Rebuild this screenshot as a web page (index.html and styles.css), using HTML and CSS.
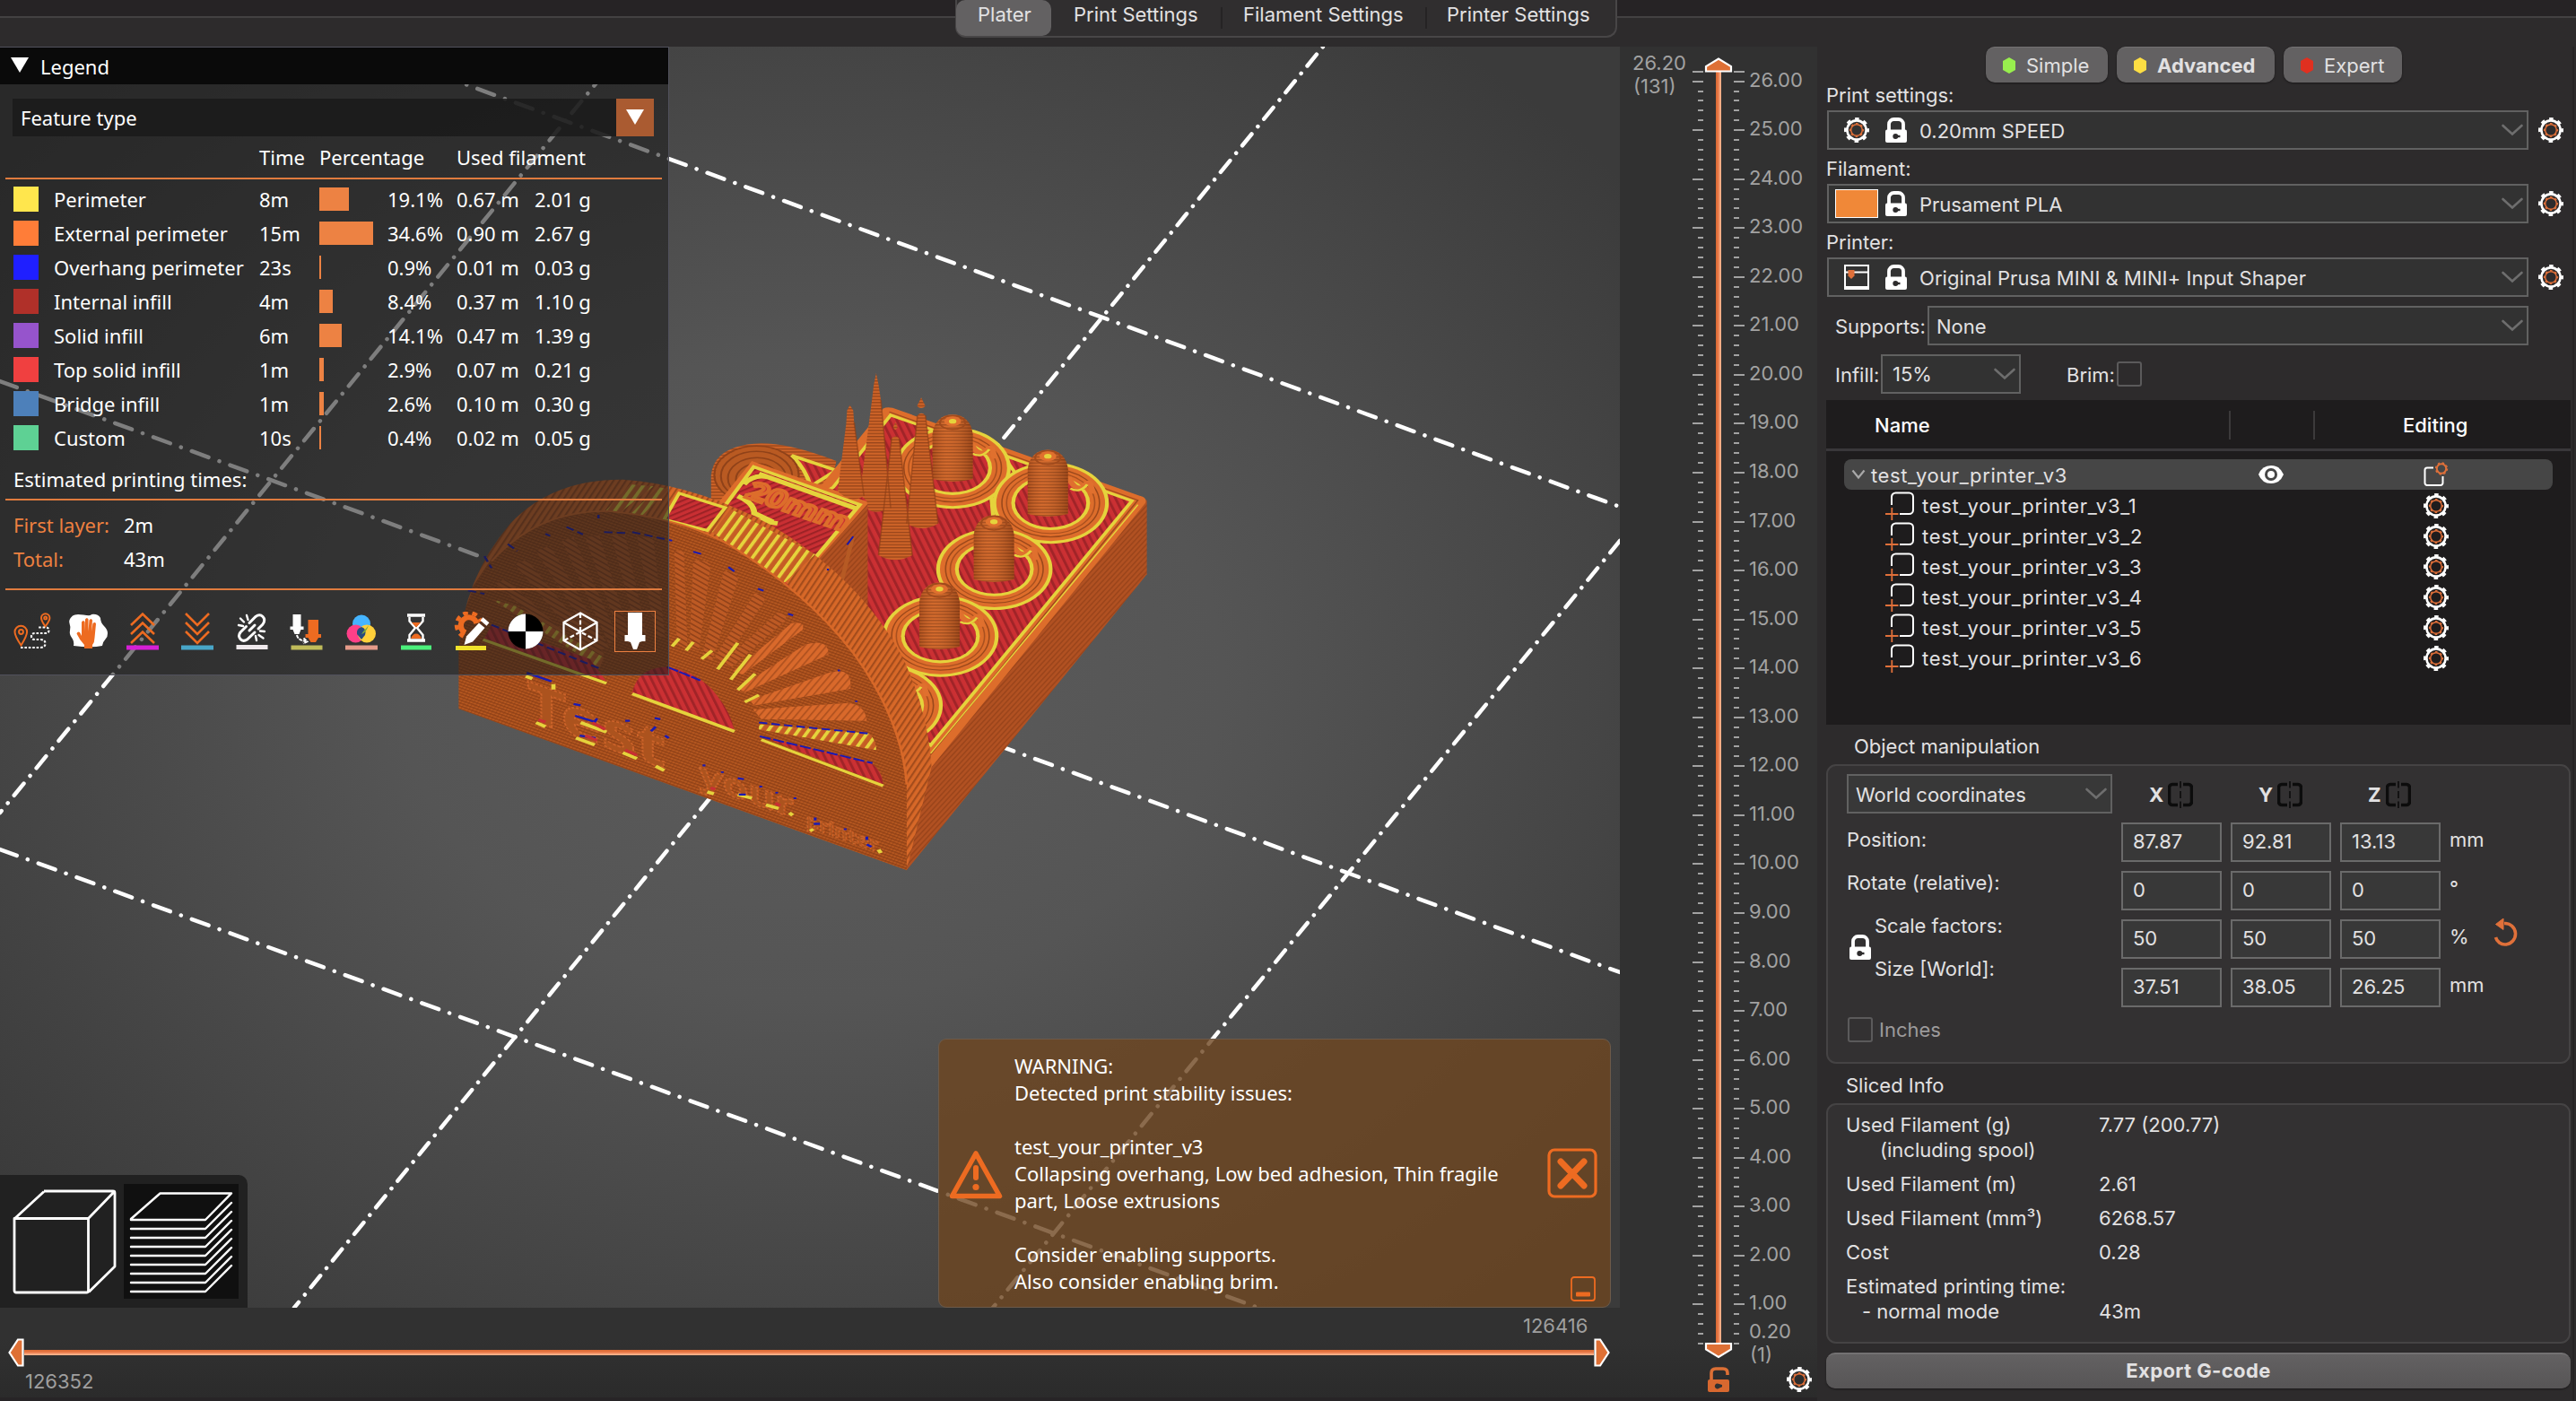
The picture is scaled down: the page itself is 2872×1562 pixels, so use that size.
FILE: index.html
```html
<!DOCTYPE html>
<html lang="en">
<head>
<meta charset="utf-8">
<title>PrusaSlicer</title>
<link rel="stylesheet" href="styles.css">
</head>
<body>
<svg class="defs" width="0" height="0">
  <symbol id="gear" viewBox="0 0 28 28">
    <circle cx="14" cy="14" r="10.6" fill="none" stroke="#fff" stroke-width="2.6"/>
    <circle cx="14" cy="14" r="12.6" fill="none" stroke="#fff" stroke-width="2.8" stroke-dasharray="4.6 5.296" stroke-dashoffset="2.3"/>
    <circle cx="14" cy="14" r="6.3" fill="none" stroke="#e0703a" stroke-width="1.5"/>
    <circle cx="14" cy="14" r="7.4" fill="none" stroke="#e0703a" stroke-width="1.4" stroke-dasharray="2.6 3.212" stroke-dashoffset="1.3"/>
  </symbol>
  <symbol id="lock" viewBox="0 0 24 28">
    <path d="M4 15V7.500a5.500 5.500 0 0 1 5.500-5.500h5a5.500 5.500 0 0 1 5.500 5.500V15" fill="none" stroke="#fff" stroke-width="3.8"/>
    <rect x="0" y="13.500" width="24" height="14.500" rx="2" fill="#fff"/>
    <circle cx="11.300" cy="21" r="3" fill="#2d2b2c"/><path d="M13 19.800h3.500v2.400H13z" fill="#2d2b2c"/>
  </symbol>
  <symbol id="chev" viewBox="0 0 24 14"><path d="M1.500 2 12 11.500 22.500 2" fill="none" stroke="#6e6e6e" stroke-width="2.600" stroke-linecap="round"/></symbol>
  <symbol id="part" viewBox="0 0 34 34">
    <path d="M7 16V7a4.500 4.500 0 0 1 4.500-4.500h15A4.500 4.500 0 0 1 31 7v14.500a4.500 4.500 0 0 1-4.500 4.500H16" fill="none" stroke="#fff" stroke-width="2"/>
    <path d="M0 26h14.500M7.300 19v14" stroke="#e0703a" stroke-width="1.800"/>
  </symbol>
  <symbol id="mirror" viewBox="0 0 28 30">
    <path d="M11 3.500H5a3.500 3.500 0 0 0-3.500 3.500v16A3.500 3.500 0 0 0 5 26.500h6M17 3.500h6A3.500 3.500 0 0 1 26.500 7v16a3.500 3.500 0 0 1-3.500 3.500h-6" fill="none" stroke="#0c0c0c" stroke-width="3.600"/>
    <path d="M14 0v7.500M14 11v8M14 22.500V30" stroke="#0c0c0c" stroke-width="1.600"/>
  </symbol>
</svg>

<header class="tabbar">
  <nav class="tabs"><span class="tab active">Plater</span><span class="tab t2">Print Settings</span><span class="tab t3">Filament Settings</span><span class="tab t4">Printer Settings</span></nav>
</header>

<div class="main">
<div class="left">
<div class="upper">
<section class="view">
  <svg class="scene" viewBox="0 52 1806 1406" width="1806" height="1406">
    <defs>
      <pattern id="red" width="15" height="15" patternUnits="userSpaceOnUse" patternTransform="rotate(-20)"><rect width="15" height="15" fill="#cb3033"/><rect width="6" height="15" fill="#a12428"/></pattern>
      <pattern id="red2" width="13" height="13" patternUnits="userSpaceOnUse" patternTransform="rotate(-30)"><rect width="13" height="13" fill="#c92f33"/><rect width="13" height="5" fill="#9c2226"/></pattern>
      <pattern id="face" width="8" height="8" patternUnits="userSpaceOnUse" patternTransform="rotate(26)"><rect width="8" height="8" fill="#b65820"/><rect y="0" width="8" height="3.500" fill="#944317"/><rect width="2.500" height="8" fill="#8a3e16" opacity=".45"/></pattern>
      <pattern id="side" width="9" height="9" patternUnits="userSpaceOnUse" patternTransform="rotate(-56)"><rect width="9" height="9" fill="#b15122"/><rect width="9" height="3.500" fill="#9c451b"/></pattern>
      <pattern id="band" width="12" height="12" patternUnits="userSpaceOnUse" patternTransform="rotate(-64)"><rect width="12" height="12" fill="#d76828"/><rect width="12" height="4.500" fill="#a34c1c"/></pattern>
      <pattern id="wedge" width="13" height="13" patternUnits="userSpaceOnUse" patternTransform="rotate(-58)"><rect width="13" height="13" fill="#d9692b"/><rect width="13" height="4" fill="#b25320"/></pattern>
      <pattern id="wedged" width="12" height="12" patternUnits="userSpaceOnUse" patternTransform="rotate(38)"><rect width="12" height="12" fill="#bd5a24"/><rect width="12" height="4" fill="#93431a"/></pattern>
      <pattern id="rings" width="10" height="9" patternUnits="userSpaceOnUse"><rect width="10" height="9" fill="#cf6428"/><rect width="10" height="3.500" fill="#97451a"/></pattern>
      <pattern id="ystripe" width="19" height="19" patternUnits="userSpaceOnUse" patternTransform="rotate(28)"><rect width="19" height="19" fill="#c65d25"/><rect width="8" height="19" fill="#e5d33c"/></pattern>
      <linearGradient id="cyl"><stop offset="0" stop-color="#5a2408" stop-opacity=".25"/><stop offset=".35" stop-color="#ffa055" stop-opacity=".12"/><stop offset="1" stop-color="#4a1c05" stop-opacity=".35"/></linearGradient>
      <g id="ring">
        <ellipse rx="124" ry="119" fill="#e5d33c"/><ellipse rx="116" ry="111" fill="#dd6d2b"/>
        <ellipse rx="104" ry="99" fill="none" stroke="#9a481b" stroke-width="3"/><ellipse rx="94" ry="89" fill="none" stroke="#a9501f" stroke-width="3"/>
        <ellipse rx="84" ry="79" fill="#e5d33c"/><ellipse rx="76" ry="71" fill="url(#red)"/>
        <path d="M38-75q12 38 30 30q10-18 16-12l6 30" fill="none" stroke="#e0702e" stroke-width="13"/><path d="M42-42q20 15 36-12" fill="none" stroke="#e5d33c" stroke-width="6"/>
      </g>
      <g id="post">
        <path d="M-43 168V38C-40 0-22-19 0-19S40 0 43 38V168Q0 184-43 168Z" fill="url(#rings)"/>
        <path d="M-43 168V38C-40 0-22-19 0-19S40 0 43 38V168Q0 184-43 168Z" fill="url(#cyl)"/>
        <ellipse rx="27" ry="20" cy="4" fill="none" stroke="#a04a1c" stroke-width="4"/><ellipse rx="18" ry="14" fill="#e0702e"/><ellipse rx="8" ry="7" fill="#e5d33c"/>
      </g>
    </defs>
    <g class="bed">
      <path class="la" d="M698 52 0 906"/>
      <path class="la a2" d="M1475 52 328 1458"/>
      <path class="la" d="M1806 603 1107 1458"/>
      <path class="lb" d="M404 52 1806 565"/>
      <path class="lb" d="M0 425 1806 1084"/>
      <path class="lb" d="M0 947 1403 1458"/>
    </g>
    <g transform="translate(480 400) scale(.523 .38265)">
      <!-- round hole stub at the back -->
      <path d="M598 340Q605 250 705 246Q770 246 865 298L840 470L598 430Z" fill="url(#rings)"/>
      <path d="M770 282 865 325 810 372Q800 320 770 282Z" fill="url(#red)" stroke="#e5d33c" stroke-width="9"/>
      <ellipse cx="695" cy="340" rx="88" ry="84" fill="#b95a22"/>
      <g fill="none" stroke="#8f4219" stroke-width="4"><ellipse cx="695" cy="338" rx="90" ry="84"/><ellipse cx="695" cy="342" rx="76" ry="72"/><ellipse cx="696" cy="348" rx="62" ry="60"/><ellipse cx="697" cy="352" rx="46" ry="46"/></g>
      <!-- plate -->
      <path d="M1527 410V628L1015 1490 990 1300 1065 1170Z" fill="url(#side)"/>
      <path d="M965 145Q972 140 985 143L1518 402Q1528 410 1524 420L1065 1195 800 900 600 560 835 365Z" fill="#dd6d2b"/>
      <path d="M978 155 1508 412 1065 1155" fill="none" stroke="#9f4a1c" stroke-width="3"/>
      <path d="M981 164 1495 414 1066 1126 780 860 620 560 858 375Z" fill="url(#red)" stroke="#e5d33c" stroke-width="8"/>
      <path d="M1508 425 1066 1150" stroke="#e5d33c" stroke-width="3"/>
      <path d="M1195 400 1200 470M1222 285 1245 330 1215 420M1300 535 1200 505" stroke="#e5d33c" stroke-width="8" fill="none"/>
      <use href="#ring" transform="translate(1113 318)"/>
      <use href="#ring" transform="translate(1322 420)"/>
      <use href="#ring" transform="translate(1202 613)"/>
      <use href="#ring" transform="translate(1087 808)"/>
      <use href="#ring" transform="translate(968 1010)"/>
      <use href="#post" transform="translate(1113 182)"/>
      <use href="#post" transform="translate(1316 284)"/>
      <use href="#post" transform="translate(1201 475)"/>
      <use href="#post" transform="translate(1085 671)"/>
      <!-- 20mm block -->
      <path d="M932 420V720L870 660 815 590Z" fill="url(#side)"/>
      <path d="M685 298 935 418 822 592 612 422Z" fill="#dd6d2b"/>
      <path d="M689 315 915 425 820 580 628 428Z" fill="url(#red2)" stroke="#e5d33c" stroke-width="9"/>
      <path d="M700 335 905 435M668 365Q690 335 720 345M690 470 740 480M655 400Q690 420 690 450L730 475" stroke="#e5d33c" stroke-width="13" fill="none"/>
      <text class="emboss top" transform="matrix(.9 .43 -.42 .85 668 402)">20mm</text>
      <path d="M900 520 875 655" stroke="#b65a24" stroke-width="9"/><path d="M901 518 888 542" stroke="#1616b0" stroke-width="4"/>
      <!-- spikes -->
      <g id="spikes" fill="url(#rings)">
        <path d="M894 135 901 150 903 185 924 400Q895 425 868 385L886 190 888 150Z"/>
        <path d="M950 42 955 75 960 120 981 435Q948 455 933 440L930 415 915 395 941 120 945 75Z"/>
        <path d="M1046 113 1055 138Q1046 150 1037 138ZM1038 165Q1046 152 1055 165L1082 480Q1048 508 1015 480Z"/>
        <path d="M991 185 996 200 991 208 986 200ZM983 232Q991 220 999 232L1027 572Q991 600 955 572Z"/>
      </g>
      <g fill="none" stroke="#8a3e16" stroke-width="3" opacity=".6"><path d="M903 185 924 400M960 120 981 435M1055 165 1082 480M999 232 1027 572M983 232 955 572M1038 165 1015 480"/></g>
      <!-- arch -->
      <path d="M60 850Q70 640 170 480Q260 350 410 352Q560 365 720 480Q920 640 1010 880Q1062 1040 1068 1190L1015 1490 1000 1130Q930 900 760 655Q620 500 480 465Q330 420 160 560Q70 680 60 850Z" fill="url(#band)"/>
      <path d="M425 366 475 372 400 452 370 448ZM485 374 508 380 450 458 425 455Z" fill="url(#ystripe)"/>
      <path d="M530 392 628 434 590 500 498 468Z" fill="url(#red2)" stroke="#e5d33c" stroke-width="8"/>
      <path d="M640 438 820 570 755 652 600 505Z" fill="url(#ystripe)"/>
      <path d="M60 850Q66 690 130 590Q230 440 380 444Q540 465 640 545Q800 680 900 855Q1005 1050 1015 1240V1490L60 1020Z" fill="url(#face)"/>
      <path d="M130 590Q230 440 380 444Q540 465 640 545Q800 680 900 855Q1005 1050 1015 1240" fill="none" stroke="#d76828" stroke-width="5"/>
      <!-- fan slots -->
      <g fill="url(#wedged)">
        <path d="M520 560 540 560 548 850 525 830Z"/><path d="M560 590Q590 580 597 605L572 850 552 840Z"/>
        <path d="M625 620Q655 615 655 645L600 880 580 860Z"/><path d="M690 685Q712 680 712 705L622 890 606 870Z"/>
        <path d="M740 740Q765 740 755 765L640 900 626 880Z"/>
        <path d="M440 515 475 525 500 810 480 810ZM385 512 415 515 460 800 440 800ZM330 520 360 515 425 810 405 815ZM280 530 305 520 400 815 380 830ZM225 560 255 545 380 840 360 850ZM180 600 205 585 370 860 350 880ZM140 655 160 640 360 890 350 905Z"/>
      </g>
      <g fill="url(#wedge)">
        <path d="M770 770Q800 765 793 790L665 920 645 910Z"/><path d="M800 832Q850 815 848 862L670 972 655 960Z"/>
        <path d="M850 915Q900 895 895 962L690 1010 680 995Z"/><path d="M870 1005Q925 995 930 1055L705 1050 688 1022Z"/>
      </g>
      <path d="M700 1065 935 1092Q950 1110 950 1140L700 1080Z" fill="url(#ystripe)"/>
      <path d="M130 700 180 720 370 870 360 900Z" fill="url(#ystripe)" opacity=".8"/>
      <path d="M515 838 530 815M545 850 560 825M578 875 600 850M612 905 655 828M640 935 682 862M655 965 692 918M670 1000 700 980" stroke="#e5d33c" stroke-width="8"/>
      <path d="M430 975Q440 900 505 898 575 915 610 980 640 1030 648 1085Z" fill="url(#red)"/><path d="M430 976 648 1086" stroke="#e5d33c" stroke-width="9"/>
      <path d="M505 898 575 937" stroke="#1a1ab4" stroke-width="5" stroke-dasharray="26 3"/>
      <path d="M705 1100 940 1178Q962 1200 965 1240Z" fill="url(#red)"/><path d="M705 1110 965 1244" stroke="#e5d33c" stroke-width="8"/>
      <path d="M115 815 130 775 340 875 375 940Z" fill="url(#red)"/><path d="M112 818 375 946" stroke="#e5d33c" stroke-width="8"/>
      <g stroke="#1a1ab4" stroke-width="5" fill="none" stroke-dasharray="18 9"><path d="M700 1060 935 1092"/><path d="M702 1100 942 1178" stroke-dasharray="24 6"/><path d="M130 775 365 905"/><path d="M80 675 115 685M165 540 185 560M245 510 255 516M290 490 325 512M358 455v10M370 505 420 508M430 505 515 530M560 562 580 570M635 607 650 622M698 670 710 676M762 743 773 748M115 575 130 610M868 908h5M905 998h5M845 614h4"/></g>
      <!-- raised lettering -->
      <g class="letters">
        <text class="emboss f1" transform="matrix(1 .49 0 1.05 205 1048)">T</text>
        <text class="emboss f1" transform="matrix(1 .49 0 1.05 278 1085)">est</text>
        <text class="emboss f2" transform="matrix(1 .49 0 1.05 572 1240)">your</text>
        <text class="emboss f3" transform="matrix(1 .49 0 1.2 800 1362)">printer</text>
      </g>
      <path d="M203 925 217 932M262 948v16M225 1060 245 1072M320 1060 375 1088M310 1105 350 1125M410 1148 440 1165M480 1187 498 1200M590 1262 604 1268M655 1270 685 1280M715 1300 742 1310M765 1323 772 1330M810 1370 815 1376M955 1430 960 1440" stroke="#e5d33c" stroke-width="9"/>
      <path d="M205 915 258 940M305 1006 320 1010M308 1040 350 1058 355 1048M318 1098 352 1105M415 1055h10M470 1085 480 1072M478 1047 490 1050M500 1098 508 1105M583 1182v6M622 1202v5M655 1222 668 1225M704 1244v5M657 1270h15M738 1262v5M777 1278v5M820 1337v8M817 1355h13M884 1368v5M930 1392v10M930 1415 940 1422" stroke="#1a1ab4" stroke-width="6" fill="none"/>
      <path d="M345 1060 372 1080M330 1098 355 1112M415 1140 440 1155M230 1052 245 1058M597 1250 607 1255M735 1295 745 1302" stroke="#c92f33" stroke-width="8"/>
    </g>
  </svg>

  <aside class="legend">
    <div class="lg-title"><i class="tri"></i>Legend</div>
    <div class="lg-combo"><span>Feature type</span><b><i class="tri"></i></b></div>
    <div class="lg-row lg-head"><span></span><span></span><span>Time</span><span>Percentage</span><span></span><span class="wide">Used filament</span></div>
    <hr>
    <div class="lg-rows" id="features"></div>
    <p class="lg-est">Estimated printing times:</p>
    <hr>
    <dl><dt>First layer:</dt><dd>2m</dd><dt>Total:</dt><dd>43m</dd></dl>
    <hr>
    <div class="tools">
      <svg viewBox="0 0 44 44"><g fill="none" stroke="#ed6b21" stroke-width="2"><path d="M8.500 37.500Q1.500 27 1.500 22.500a6.800 6.800 0 0 1 13.600 0Q15 27 8.500 37.500Z"/><circle cx="8.500" cy="22.500" r="2.400"/><path d="M35.500 16.500Q31 10 31 7a4.700 4.700 0 0 1 9.400 0q0 3-4.900 9.500Z"/><circle cx="35.700" cy="7" r="1.500"/></g><path d="M8 40h22q5.500 0 5.500-4.500T30 31h-6q-4 0-4-3.500t4-3.500h12q3.500 0 3.500-3.200T36 17.500H27" fill="none" stroke="#fff" stroke-width="2.200" stroke-dasharray="2.600 1.800"/></svg>
      <svg viewBox="0 0 44 44"><path d="M5 4.500Q8 2 17 3.500T26 3q7-1 10 4 0 5 4 9t4 8q0 4-2 6-3 3-4 8-12 2.500-32 0 1-5-2-9T2 21q1-4-.5-8T5 4.500Z" fill="#fff"/><path d="M15 27V11.500q2-3 3.500 0V22l.5-13.500q2-3 3.500 0V22l1-12.500q2-3 3.500 0L26 22l1.500-9q2.500-2 3.500.5L29.500 29q0 5-2.500 8v4h-9v-4q-5-5-8.500-12.500 1-3 3.500-1.500Z" fill="#ed6b21"/></svg>
      <svg viewBox="0 0 44 44"><path d="M9 15 22 2.500 35 15M9 25 22 12.500 35 25M9 35 22 22.500 35 35" fill="none" stroke="#ed6b21" stroke-width="2.600"/><path d="M4 37.500h36v5H4z" fill="#d61fd6"/></svg>
      <svg viewBox="0 0 44 44"><path d="M9 2 22 15 35 2M9 12 22 25 35 12M9 22 22 35 35 22" fill="none" stroke="#ed6b21" stroke-width="2.600"/><path d="M4 37.500h36v5H4z" fill="#48a6c8"/></svg>
      <svg viewBox="0 0 44 44"><g fill="none" stroke="#fff" stroke-width="3" stroke-linecap="round"><path d="M19 12.500l7-7q4.500-3.500 8 0t0 8.500l-5 5M25 23l-8.500 8q-4.500 3-7.500-.5t0-7.500l6.500-6.500M19 21l6-6"/><path d="M16 4l1.500 5M9 7.500l4 4M7 15l5 1M36 22l-5-.5M34.500 29.500l-5-3.500M27 32l-1-5" stroke-width="2.400"/></g><path d="M4.500 37h35v5h-35z" fill="#efe9ec"/></svg>
      <svg viewBox="0 0 44 44"><path d="M6.500 3h9v13.500h3V20h-3l-2 5h-5l-2-5h-3v-3.500h3Z" fill="#fff"/><path d="M23.500 9H35v16h3v4h-3l-3 5h-5.500l-3-5h-3v-4h3Z" fill="#ed6b21"/><path d="M11 26q1 6 10 7M18.500 29.500l4 3.800-4.500 2" fill="none" stroke="#fff" stroke-width="2" stroke-dasharray="4 1"/><path d="M4.500 37.500h35v5h-35z" fill="#c0bb5a"/></svg>
      <svg viewBox="0 0 44 44"><circle cx="22" cy="13.500" r="10" fill="#45b4ff"/><circle cx="15.500" cy="24.500" r="10" fill="#ff3f88"/><circle cx="28" cy="24.500" r="10" fill="#ffd03a"/><path d="M22 17q6 2 4 9l-4 5-5-6q-1-6 5-8Z" fill="#274a7d"/><path d="M24 22q4-4 6-7-3 9-8 10Z" fill="#7fa83e"/><path d="M4 37.500h36v5H4z" fill="#e59b8a"/></svg>
      <svg viewBox="0 0 44 44"><path d="M12 4h20M12 32h20" stroke="#fff" stroke-width="3.600"/><path d="M14.500 6v4.500L21 18l-6.500 8v5M29.500 6v4.500L23 18l6.500 8v5" fill="none" stroke="#fff" stroke-width="2.400"/><path d="M17 12h10l-5 5.500ZM16 30q2-5.500 6-5.500t6 5.500Z" fill="#ed6b21"/><path d="M5 37.500h34v5H5z" fill="#4bf07b"/></svg>
      <svg viewBox="0 0 44 44"><path d="M16 23.500A9 9 0 1 1 28.500 13" fill="none" stroke="#ed6b21" stroke-width="6"/><path d="M13.800 27.500A13.800 13.800 0 1 1 33 11" fill="none" stroke="#ed6b21" stroke-width="4.500" stroke-dasharray="5.500 4.600"/><path d="M31 12.500 37.500 18 24 33.500 14.500 37 17 27.500Z" fill="#fff"/><path d="M34 8l7 6" stroke="#fff" stroke-width="4.500"/><path d="M5 38h34v5H5z" fill="#f0e22b"/></svg>
      <svg viewBox="0 0 44 44"><circle cx="22" cy="22" r="19.500" fill="#000"/><path d="M22 22V2.500A19.500 19.500 0 0 0 2.500 22ZM22 22v19.500A19.500 19.500 0 0 0 41.500 22Z" fill="#fff"/></svg>
      <svg viewBox="0 0 44 44"><path d="M22 1.500 40.500 12v20L22 42.500 3.500 32V12ZM3.500 12 22 22.500 40.500 12M22 22.500v20" fill="none" stroke="#fff" stroke-width="2.200"/><path d="M22 2v20M4 32l18-9.500L40 32" fill="none" stroke="#fff" stroke-width="2.200" stroke-dasharray="5 2.500"/></svg>
      <svg class="on" viewBox="0 0 44 44"><path d="M14 1h16v25h3.500v7H30l-3 1-3 8h-4l-3-8-3-1h-3.500v-7H14Z" fill="#fff"/></svg>
    </div>
  </aside>

  <div class="viewmode">
    <svg viewBox="0 0 128 128"><path d="M6.500 38.500 39 8.500M6 38.500h82.500V119a2 2 0 0 1-2 2H8a2 2 0 0 1-2-2ZM39 8h77a2 2 0 0 1 2 2v82L89 120.500M88.500 38.500 117 9" fill="none" stroke="#fff" stroke-width="2.800" stroke-linejoin="round"/></svg>
    <svg class="sel" viewBox="0 0 128 128"><path d="M8 39 40.500 10.500H120L91 40H8ZM8 50H91l29-29M8 60H91l29-29M8 70H91l29-29M8 80H91l29-29M8 90H91l29-29M8 100H91l29-29M8 110H91l29-29M8 120H91l29-29" fill="none" stroke="#fff" stroke-width="2.400" stroke-linejoin="round" stroke-linecap="round"/></svg>
  </div>

  <div class="warning">
    <svg class="w-ico" viewBox="0 0 62 56"><path d="M31 4 57.500 51.500H4.500Z" fill="none" stroke="#ed6b21" stroke-width="5.500" stroke-linejoin="round"/><path d="M31 20v11" stroke="#ed6b21" stroke-width="6" stroke-linecap="round"/><circle cx="31" cy="41.500" r="3.600" fill="#ed6b21"/></svg>
    <p>WARNING:<br>Detected print stability issues:<br><br>test_your_printer_v3<br>Collapsing overhang, Low bed adhesion, Thin fragile<br>part, Loose extrusions<br><br>Consider enabling supports.<br>Also consider enabling brim.</p>
    <div class="w-btns">
      <svg class="close" viewBox="0 0 56 56"><rect x="2" y="2" width="52" height="52" rx="6" fill="none" stroke="#ed6b21" stroke-width="3.200"/><path d="M15 15 41 42M41 15 15 42" stroke="#ed6b21" stroke-width="7" stroke-linecap="round"/></svg>
      <svg class="mini" viewBox="0 0 28 28"><rect x="1" y="1" width="26" height="26" rx="3" fill="none" stroke="#ed6b21" stroke-width="1.800"/><rect x="6" y="17.500" width="16" height="5" rx="1" fill="#ed6b21"/></svg>
    </div>
  </div>
</section>

<svg class="layers" id="layers" viewBox="1806 52 220 1406" width="220" height="1406">
  <defs><linearGradient id="trk"><stop offset=".33" stop-color="#dd6d38"/><stop offset=".33" stop-color="#ec8152"/><stop offset=".66" stop-color="#ec8152"/><stop offset=".66" stop-color="#f8ad85"/></linearGradient></defs>
  <g id="ticks" class="ticks"></g>
  <g id="ticklabels" class="ticklabels"><text x="1820" y="78">26.20</text><text x="1821" y="104">(131)</text><text x="1950" y="1492">0.20</text><text x="1951" y="1518">(1)</text></g>
  <rect x="1913" y="80" width="6" height="1417" fill="url(#trk)"/>
  <path d="M1902 79.500V74L1916 65.500 1930 74V79.500Z" class="thumb"/>
  <path d="M1902 1498V1504.500L1916 1513 1930 1504.500V1498Z" class="thumb"/>
  <path d="M1908 1539V1531q0-5 5-5h8q5 0 5 5v2" fill="none" stroke="#dc6f35" stroke-width="3.600"/><rect x="1904" y="1538" width="24" height="14" rx="2" fill="#d8682f"/><path d="M1915 1542.500a3 3 0 1 0 2 5l3-1.200v-2.200Z" fill="#313131"/>
  <use href="#gear" x="1992" y="1524" width="28" height="28"/>
</svg>
</div>
<div class="moves">
  <span class="mv-max">126416</span>
  <div class="mv-track"><svg viewBox="0 0 18 32"><path d="M16.500 1.500H11L1.500 16 11 30.500h5.500Z" class="thumb"/></svg><i></i><svg viewBox="0 0 18 32"><path d="M1.500 1.500H7L16.500 16 7 30.500H1.500Z" class="thumb"/></svg></div>
  <span class="mv-min">126352</span>
</div>
</div>

<section class="panel">
  <div class="modes">
    <span class="mode simple"><svg viewBox="0 0 16 18"><path d="M8 0 15 4v10L8 18 1 14V4Z" fill="#98ee4e"/></svg>Simple</span>
    <span class="mode adv"><svg viewBox="0 0 16 18"><path d="M8 0 15 4v10L8 18 1 14V4Z" fill="#fdde43"/></svg>Advanced</span>
    <span class="mode exp"><svg viewBox="0 0 16 18"><path d="M8 0 15 4v10L8 18 1 14V4Z" fill="#e03020"/></svg>Expert</span>
  </div>
  <label class="plabel">Print settings:</label>
  <div class="prow"><div class="combo"><svg class="g"><use href="#gear"/></svg><svg class="l"><use href="#lock"/></svg><span>0.20mm SPEED</span><svg class="c"><use href="#chev"/></svg></div><svg class="g"><use href="#gear"/></svg></div>
  <label class="plabel">Filament:</label>
  <div class="prow"><div class="combo"><i class="fcolor"></i><svg class="l"><use href="#lock"/></svg><span>Prusament PLA</span><svg class="c"><use href="#chev"/></svg></div><svg class="g"><use href="#gear"/></svg></div>
  <label class="plabel">Printer:</label>
  <div class="prow"><div class="combo"><svg class="g" viewBox="0 0 28 28"><path d="M1 1h26v26H1ZM1 8.500h26" fill="none" stroke="#fff" stroke-width="2"/><path d="M0 24h28v4H0z" fill="#fff"/><path d="M4.500 6h7v6.500L8 16l-3.500-3.500Z" fill="#e0703a"/></svg><svg class="l"><use href="#lock"/></svg><span class="pname">Original Prusa MINI &amp; MINI+ Input Shaper</span><svg class="c"><use href="#chev"/></svg></div><svg class="g"><use href="#gear"/></svg></div>
  <div class="srow"><label>Supports:</label><div class="combo plain"><span>None</span><svg class="c"><use href="#chev"/></svg></div></div>
  <div class="srow inf"><label>Infill:</label><div class="combo plain small"><span>15%</span><svg class="c"><use href="#chev"/></svg></div><label class="brim">Brim:</label><i class="check"></i></div>

  <div class="tree">
    <div class="thead"><span class="n">Name</span><span class="v"></span><span class="e">Editing</span></div>
    <div class="trow selected"><svg class="tw" viewBox="0 0 16 12"><path d="M1.500 1.500 8 9.500 14.500 1.500" fill="none" stroke="#a8a8a8" stroke-width="2.200"/></svg><span class="tn">test_your_printer_v3</span><svg class="eye" viewBox="0 0 28 20"><path d="M14 0Q24 0 28 10 24 20 14 20 4 20 0 10 4 0 14 0Z" fill="#fff"/><circle cx="14" cy="10" r="7" fill="#464646"/><circle cx="14" cy="10" r="4" fill="#fff"/></svg><svg class="ed" viewBox="0 0 28 28"><path d="M11 6.500H4A2.500 2.500 0 0 0 1.500 9v14.500A2.500 2.500 0 0 0 4 26h15a2.500 2.500 0 0 0 2.500-2.500V16" fill="none" stroke="#fff" stroke-width="2"/><circle cx="20" cy="7.500" r="5.200" fill="none" stroke="#e0703a" stroke-width="2"/><circle cx="20" cy="7.500" r="6.500" fill="none" stroke="#e0703a" stroke-width="1.400" stroke-dasharray="2.400 2.705"/></svg></div>
    <div id="parts"></div>
  </div>

  <h2 class="om">Object manipulation</h2>
  <div class="box manip">
    <div class="mgrid">
      <div class="combo plain world"><span>World coordinates</span><svg class="c"><use href="#chev"/></svg></div>
      <b class="ax">X<svg><use href="#mirror"/></svg></b><b class="ax">Y<svg><use href="#mirror"/></svg></b><b class="ax">Z<svg><use href="#mirror"/></svg></b>
    </div>
    <div class="mbody">
      <div class="mlabels"><span>Position:</span><span>Rotate (relative):</span><div class="locked"><svg class="l"><use href="#lock"/></svg><div><span>Scale factors:</span><span>Size [World]:</span></div></div></div>
      <div class="mvals">
        <i>87.87</i><i>92.81</i><i>13.13</i><span>mm</span>
        <i>0</i><i>0</i><i>0</i><span>°</span>
        <i>50</i><i>50</i><i>50</i><span class="u3">%<svg viewBox="0 0 28 32"><path d="M12 5.500a11 11 0 0 1 1.500 23.500A10.500 10.500 0 0 1 2.500 21" fill="none" stroke="#e0703a" stroke-width="3.600"/><path d="M11 0V12.500L2.500 6.500Z" fill="#e0703a" stroke="#e0703a"/></svg></span>
        <i>37.51</i><i>38.05</i><i>26.25</i><span>mm</span>
      </div>
    </div>
    <div class="inches"><i class="check"></i>Inches</div>
  </div>

  <h2 class="si">Sliced Info</h2>
  <div class="box sliced">
    <div>Used Filament (g)<em>7.77 (200.77)</em></div>
    <div class="sub">(including spool)</div>
    <div class="gap">Used Filament (m)<em>2.61</em></div>
    <div class="gap">Used Filament (mm³)<em>6268.57</em></div>
    <div class="gap">Cost<em>0.28</em></div>
    <div class="gap">Estimated printing time:</div>
    <div class="nm"><span>- normal mode</span><em>43m</em></div>
  </div>
  <div class="export">Export G-code</div>
</section>
</div>
<script src="script.js"></script>
</body>
</html>
```
FILE: styles.css
```css
* { box-sizing: border-box; }
body { margin: 0; width: 2872px; height: 1562px; overflow: hidden; background: #2d2b2c; color: #e2e1e2; font: 22px/28px Inter, "Liberation Sans", sans-serif; }
i, em { font-style: normal; }
svg { display: block; flex: none; }
.defs { position: absolute; }

/* top tabs */
.tabbar { height: 52px; padding-left: 1065px; background: linear-gradient(#262325 18px, #434142 18px, #434142 20px, #2d2b2c 20px); }
.tabs { display: flex; width: 738px; height: 42px; background: #302e2f; border: 2px solid #484647; border-top: 0; border-radius: 0 0 12px 12px; }
.tab { padding-top: 2px; }
.tab.active { width: 106px; height: 40px; padding-left: 24px; background: #636162; border-radius: 10px; margin-left: -1px; }
.t2 { padding-left: 25px; width: 189px; }
.t3 { padding-left: 25px; width: 228px; }
.t4 { padding-left: 24px; }
.t3, .t4 { background: linear-gradient(#252324, #252324) 0 8px / 2px 24px no-repeat; }

.main { display: flex; height: 1510px; }
.left { width: 2026px; background: linear-gradient(#313131 1440px, #2b2b2b 1506px, #272426 1506px); }
.upper { display: flex; height: 1406px; }
.view { position: relative; width: 1806px; height: 1406px; background: radial-gradient(ellipse 1150px 900px at 903px 703px, #5c5c5c 0, #555 40%, #464646 75%, #3b3b3b 100%); font-family: "Noto Sans", sans-serif; color: #fff; overflow: hidden; }
.scene { position: absolute; inset: 0; }
.bed path { fill: none; stroke: #fff; stroke-width: 4.500; stroke-linecap: round; }
.bed .la { stroke-dasharray: 17 11.1 .1 11.1; }
.bed .a2 { stroke-dasharray: 16.5 10.8 .1 10.8; stroke-dashoffset: 27; }
.bed .lb { stroke-dasharray: 20 12.7 .1 12.7; }
.emboss { font-family: "Noto Sans", sans-serif; font-weight: 700; fill: #ac531e; stroke: #cc632a; stroke-width: 4; }
.emboss.top { font-size: 76px; fill: #c92f33; stroke: #dd6d2b; stroke-width: 9; }
.f1 { font-size: 146px; stroke-dasharray: 6 4; }
.f2 { font-size: 88px; stroke-dasharray: 6 4; }
.f3 { font-size: 44px; stroke-width: 3; stroke-dasharray: 6 4; }

/* legend window */
.legend { position: absolute; left: 0; top: 0; width: 746px; height: 701px; background: rgba(28,28,28,.57); border: solid #51515c; border-width: 1px 1px 1px 0; }
.lg-title { height: 41px; background: #0a0a0a; display: flex; align-items: center; padding-left: 12px; gap: 13px; }
.tri { display: block; width: 0; height: 0; border: solid transparent; border-width: 17px 10px 0; border-top-color: #fff; }
.lg-title .tri { margin-top: -2px; }
.lg-combo { display: flex; justify-content: space-between; align-items: center; width: 715px; height: 42px; margin: 16px 0 0 14px; padding-left: 9px; background: rgba(26,26,26,.85); }
.lg-combo b { width: 42px; height: 42px; background: #aa5b31; padding: 12px 0 0 11px; }
.lg-row { display: grid; grid-template-columns: 45px 229px 67px 76px 77px 87px 1fr; height: 38px; align-items: center; padding-left: 15px; }
.lg-head { margin-top: 1px; height: 45px; padding-bottom: 1px; }
.wide { white-space: nowrap; }
.legend hr { width: 732px; height: 2px; margin: 0 0 0 6px; border: 0; background: #e07b3e; }
.lg-rows { padding: 3px 0 0; }
.swatch { width: 28px; height: 28px; }
.bar { height: 26px; background: #ed8243; }
.lg-est { margin: 0; padding: 13px 0 7px 15px; height: 49px; }
dl { display: grid; grid-template-columns: 123px 1fr; grid-auto-rows: 38px; align-items: center; margin: 0; padding: 8px 0 14px 15px; }
dt { color: #ed8040; }
dd { margin: 0; }
.tools { display: flex; gap: 17px; padding: 24px 0 0 15px; }
.tools svg { width: 44px; height: 44px; }
.tools .on { outline: 1.500px solid #ed8040; }

.viewmode { position: absolute; left: 0; bottom: 0; width: 276px; height: 148px; display: flex; padding: 10px; background: #212121; border-radius: 0 10px 0 0; }
.viewmode svg { width: 128px; height: 128px; }
.viewmode .sel { background: #101010; }

.warning { position: absolute; left: 1046px; top: 1106px; width: 750px; height: 300px; background: rgba(110,70,32,.8); border: 1px solid #6c5a4a; border-radius: 9px; display: flex; }
.w-ico { width: 62px; height: 56px; margin: 123px 0 0 10px; }
.warning p { margin: 14px 0 0 12px; width: 594px; line-height: 30px; white-space: nowrap; }
.w-btns { width: 56px; display: flex; flex-direction: column; align-items: flex-end; }
.close { width: 56px; height: 56px; margin-top: 121px; }
.mini { width: 28px; height: 28px; margin: 87px 2px 0 0; }

/* sliders */
.layers { overflow: visible; font: 22px Inter, sans-serif; }
.ticks path { stroke: #a2a2a2; stroke-width: 2; }
.ticklabels text { fill: #a2a2a2; }
.thumb { fill: #de7035; stroke: #fff; stroke-width: 2.200; }
.moves { height: 104px; color: #9f9f9f; }
.mv-max { display: block; height: 34px; padding: 6px 0 0 1698px; }
.mv-track { display: flex; align-items: center; height: 32px; padding-left: 9px; }
.mv-track svg { width: 18px; height: 32px; }
.mv-track i { width: 1750px; height: 6px; background: linear-gradient(#dd6d38 2px, #ec8152 2px, #ec8152 4px, #f8ad85 4px); }
.mv-min { display: block; padding: 2px 0 0 28px; }

/* settings panel */
.panel { width: 844px; height: 1510px; padding-left: 10px; border-right: 2px solid #262425; }
.modes { display: flex; gap: 10px; padding-left: 178px; height: 40px; }
.mode { display: flex; align-items: center; gap: 11px; height: 40px; padding-left: 18px; background: #636162; border-radius: 10px; border-top: 1px solid #747273; box-shadow: 0 1px 2px #1a1819; }
.mode svg { width: 16px; height: 18px; }
.simple { width: 136px; } .adv { width: 176px; font-weight: 700; } .exp { width: 132px; }
.plabel { display: block; height: 31px; }
.plabel ~ .plabel { height: 38px; padding-top: 7px; }
.prow { display: flex; align-items: center; gap: 11px; height: 44px; padding-left: 1px; }
.g { width: 28px; height: 28px; }
.l { width: 24px; height: 28px; }
.c { width: 24px; height: 14px; margin-left: auto; }
.combo { width: 782px; height: 44px; border: 2px solid #616161; background: #323232; display: flex; align-items: center; padding: 0 4px 0 17px; }
.combo span { padding-top: 1px; }
.pname { letter-spacing: .06px; }
.combo .l { margin: 0 14px 0 18px; }
.fcolor { width: 48px; height: 32px; margin-left: -10px; background: #f08838; border: 1.500px solid #fff; }
.combo .fcolor + .l { margin-left: 8px; }
.srow { display: flex; align-items: center; margin-top: 10px; padding-left: 10px; height: 44px; }
.srow label { width: 103px; padding-top: 1px; }
.plain { width: 670px; padding-left: 8px; }
.inf label { width: 51px; }
.small { width: 156px; padding-left: 11px; }
.inf .small span { padding: 0; }
.inf .brim { margin-left: 51px; width: 56px; }
.check { width: 28px; height: 28px; border: 2px solid #5b5a5b; border-radius: 3px; }
.tree { width: 830px; height: 362px; margin-top: 7px; background: #1e1c1d; }
.thead { display: flex; align-items: center; height: 57px; padding: 2px 0 0 54px; border-bottom: 3px solid #39373a; color: #fff; font-weight: 500; }
.thead .n { width: 395px; }
.thead .v { width: 96px; height: 32px; border: solid #3c3a3b; border-width: 0 2px; }
.thead .e { padding-left: 98px; }
.trow { display: flex; align-items: center; height: 34px; letter-spacing: .72px; }
.trow.selected { width: 790px; margin: 9px 0 1px 20px; background: #464646; border-radius: 8px; padding-left: 8px; }
.tw { width: 16px; height: 12px; margin-right: 6px; }
.tn { width: 432px; letter-spacing: .6px; padding-top: 1px; }
.eye { width: 28px; height: 20px; }
.ed { width: 28px; height: 28px; margin-left: 156px; }
.part { padding-left: 66px; }
.part svg:first-child { width: 34px; height: 34px; margin-right: 7px; }
.part span { width: 559px; }
h2 { font: inherit; margin: 0; }
.om { height: 44px; padding: 10px 0 0 31px; }
.box { width: 830px; background: #333132; border: 2px solid #454344; border-radius: 11px; }
.manip { height: 334px; padding: 9px 0 0 21px; }
.mgrid { display: grid; grid-template-columns: 306px 122px 122px 122px; height: 54px; }
.world { width: 296px; background: #383838; }
.ax { display: flex; align-items: center; height: 44px; padding: 1px 0 0 31px; gap: 5px; }
.ax svg { width: 28px; height: 30px; }
.mbody { display: flex; }
.mlabels { width: 306px; padding-top: 5px; }
.mlabels > span, .locked span { display: block; height: 48px; }
.locked { display: flex; }
.locked .l { margin: 24px 4px 0 3px; }
.mvals { display: grid; grid-template-columns: repeat(3, 112px) 1fr; gap: 10px; }
.mvals i { height: 44px; border: 2px solid #6a6a6a; background: #383838; padding: 5px 0 0 11px; }
.mvals span { padding-top: 5px; }
.mvals .u3 { display: flex; gap: 27px; }
.u3 svg { width: 28px; height: 32px; margin-top: -6px; }
.inches { display: flex; gap: 7px; align-items: center; margin-top: 11px; padding-left: 1px; color: #9c9a9b; }
.si { height: 44px; padding: 10px 0 0 22px; }
.sliced { height: 268px; padding: 8px 0 0 20px; }
.sliced div { display: grid; grid-template-columns: 282px 1fr; height: 28px; }
.sliced .gap { margin-top: 10px; }
.sliced .sub { padding-left: 38px; }
.nm span { padding-left: 18px; }
.export { width: 830px; height: 40px; margin-top: 10px; padding-top: 4px; border-top: 2px solid #737172; border-radius: 10px; background: linear-gradient(#636162, #575556); text-align: center; font-weight: 700; letter-spacing: .4px; box-shadow: 0 1px 2px #1a1819; }
```
FILE: script.js
```js
const features = [
  ['#ffe64d', 'Perimeter', '8m', 19.1, '0.67 m', '2.01 g'],
  ['#ff7d38', 'External perimeter', '15m', 34.6, '0.90 m', '2.67 g'],
  ['#1f1fff', 'Overhang perimeter', '23s', 0.9, '0.01 m', '0.03 g'],
  ['#b03029', 'Internal infill', '4m', 8.4, '0.37 m', '1.10 g'],
  ['#9654cc', 'Solid infill', '6m', 14.1, '0.47 m', '1.39 g'],
  ['#f04040', 'Top solid infill', '1m', 2.9, '0.07 m', '0.21 g'],
  ['#4d80ba', 'Bridge infill', '1m', 2.6, '0.10 m', '0.30 g'],
  ['#5ed194', 'Custom', '10s', 0.4, '0.02 m', '0.05 g'],
];
document.getElementById('features').innerHTML = features.map(([c, name, time, pct, m, g]) =>
  `<div class="lg-row"><i class="swatch" style="background:${c}"></i><span>${name}</span><span>${time}</span>` +
  `<i class="bar" style="width:${Math.max(1.5, pct * 1.74)}px"></i><span>${pct.toFixed(1)}%</span><span>${m}</span><span>${g}</span></div>`).join('');

document.getElementById('parts').innerHTML = [1, 2, 3, 4, 5, 6].map(n =>
  `<div class="trow part"><svg><use href="#part"/></svg><span>test_your_printer_v3_${n}</span><svg class="g"><use href="#gear"/></svg></div>`).join('');

// one tick per 0.2 mm layer, long ticks on whole millimetres
let d = '', labels = '';
for (let n = 1; n <= 131; n++) {
  const y = Math.round(1498 - (n - 1) * 10.91);
  const major = n % 5 === 0 || n === 131;
  d += `M${major ? 1887 : 1893} ${y}H1899M1933 ${y}H${major ? 1945 : 1939}`;
  if (n % 5 === 0) labels += `<text x="1950" y="${y + 6}">${(n / 5).toFixed(2)}</text>`;
}
document.getElementById('ticks').innerHTML = `<path d="${d}"/>`;
document.getElementById('ticklabels').innerHTML += labels;
```
